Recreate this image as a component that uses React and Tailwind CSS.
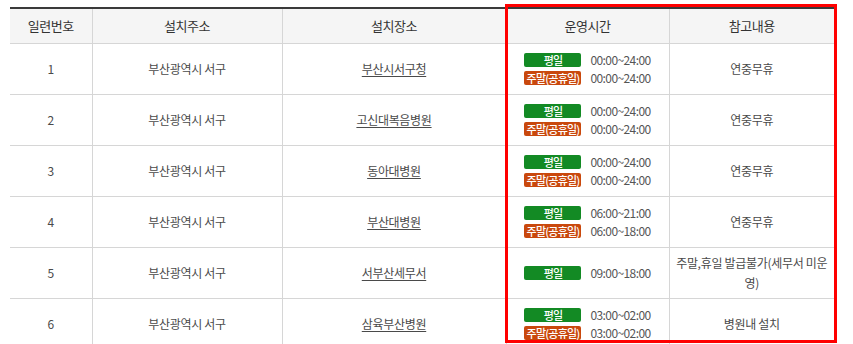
import React from 'react';

const rows = [
  { no: 1, addr: '부산광역시 서구', place: '부산시서구청', weekday: '00:00~24:00', weekend: '00:00~24:00', note: '연중무휴' },
  { no: 2, addr: '부산광역시 서구', place: '고신대복음병원', weekday: '00:00~24:00', weekend: '00:00~24:00', note: '연중무휴' },
  { no: 3, addr: '부산광역시 서구', place: '동아대병원', weekday: '00:00~24:00', weekend: '00:00~24:00', note: '연중무휴' },
  { no: 4, addr: '부산광역시 서구', place: '부산대병원', weekday: '06:00~21:00', weekend: '06:00~18:00', note: '연중무휴' },
  { no: 5, addr: '부산광역시 서구', place: '서부산세무서', weekday: '09:00~18:00', weekend: null, note: '주말,휴일 발급불가(세무서 미운영)' },
  { no: 6, addr: '부산광역시 서구', place: '삼육부산병원', weekday: '03:00~02:00', weekend: '03:00~02:00', note: '병원내 설치' },
];

function Badge({ kind }) {
  const weekday = kind === 'weekday';
  return (
    <span
      className={`inline-block w-[57px] h-[14px] rounded-[2px] text-center text-[11px] leading-[14px] font-medium text-white tracking-[-0.8px] whitespace-nowrap overflow-hidden ${
        weekday ? 'bg-[#138a24]' : 'bg-[#c9480d]'
      }`}
    >
      {weekday ? '평일' : '주말(공휴일)'}
    </span>
  );
}

function TimeLine({ kind, time }) {
  return (
    <div className="flex items-center gap-[9px] h-[14px]">
      <Badge kind={kind} />
      <span className="text-[12px] text-[#555] tracking-[-0.6px] leading-[14px]">{time}</span>
    </div>
  );
}

export default function App() {
  return (
    <div
      className="relative w-[853px] h-[344px] bg-white overflow-hidden"
      style={{ fontFamily: '"Noto Sans CJK KR", "Noto Sans", sans-serif' }}
    >
      <div className="pl-[10px] pt-[7px]">
        <table className="table-fixed w-[824px] border-collapse border-t-2 border-[#3a3a3a]">
          <colgroup>
            <col className="w-[82px]" />
            <col className="w-[190px]" />
            <col className="w-[224px]" />
            <col className="w-[163px]" />
            <col className="w-[165px]" />
          </colgroup>
          <thead>
            <tr className="h-[35px] bg-[#f5f5f5] text-[13px] text-[#333]">
              {['일련번호', '설치주소', '설치장소', '운영시간', '참고내용'].map((h, i) => (
                <th
                  key={h}
                  className={`font-normal tracking-[-0.5px] border-b border-[#d6d6d6] ${i > 0 ? 'border-l' : ''}`}
                >
                  {h}
                </th>
              ))}
            </tr>
          </thead>
          <tbody className="text-[12px] text-[#4a4a4a]">
            {rows.map((r) => (
              <tr key={r.no} className="h-[51px]">
                <td className="text-center border-b border-[#d6d6d6]">{r.no}</td>
                <td className="text-center border-b border-l border-[#d6d6d6] tracking-[-0.3px]">{r.addr}</td>
                <td className="text-center border-b border-l border-[#d6d6d6] tracking-[-0.3px]">
                  <span className="underline underline-offset-2">{r.place}</span>
                </td>
                <td className="border-b border-l border-[#d6d6d6]">
                  <div className="flex flex-col items-center">
                    <div className="flex flex-col gap-[4px]">
                      <TimeLine kind="weekday" time={r.weekday} />
                      {r.weekend && <TimeLine kind="weekend" time={r.weekend} />}
                    </div>
                  </div>
                </td>
                <td className="text-center border-b border-l border-[#d6d6d6] px-[4px] leading-[20px] tracking-[-0.3px]">
                  {r.note}
                </td>
              </tr>
            ))}
          </tbody>
        </table>
      </div>
      <div className="absolute left-[505px] top-[4px] w-[332px] h-[339px] border-[3px] border-[#ff0000]" />
    </div>
  );
}
